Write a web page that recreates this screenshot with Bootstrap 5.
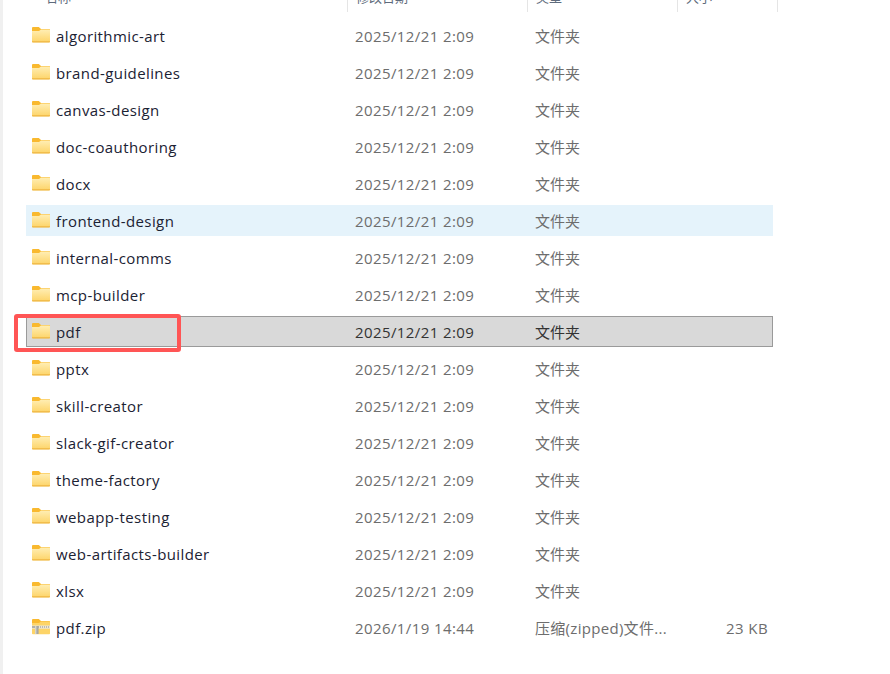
<!DOCTYPE html>
<html lang="zh">
<head>
<meta charset="utf-8">
<title>文件列表</title>
<link href="https://cdn.jsdelivr.net/npm/bootstrap@5.3.0/dist/css/bootstrap.min.css" rel="stylesheet">
<style>
html,body{height:100%;}
body{background:#fff;font-family:"Open Sans","Noto Sans CJK SC",sans-serif;font-size:15px;overflow:hidden;}
.explorer{height:674px;margin-left:3px;box-shadow:-3px 0 0 #f0f0f0;padding-left:23px;}
.col-head{height:12px;overflow:hidden;width:752px;display:grid;grid-template-columns:322px 180px 150px 100px;color:#5e6b7c;font-size:13px;}
.col-head>div{padding-left:8px;border-right:1px solid #e5e5e5;line-height:12px;}
.col-head span{display:block;margin-top:-9px;}
.col-head>div:first-child{padding-left:19px;}
.file-list{margin-top:8px;width:747px;display:flex;flex-direction:column;gap:6px;}
.file-row{height:31px;padding-top:2px;display:grid;grid-template-columns:321px 180px 150px 96px;align-items:center;color:#6d6d6d;border:1px solid transparent;}
.file-row>div{padding-left:8px;margin-left:-1px;white-space:nowrap;}
.file-row>.fname{display:flex;align-items:center;color:#1b2233;padding-left:6px;margin-left:-1px;gap:6px;}
.fname svg{flex:none;margin-top:-3px;}
.fname span,.fdate,.fsize{letter-spacing:.4px;}
.ftype-long{letter-spacing:.3px;}
.fsize{text-align:right;padding-right:6px;}
.is-hover{background:#e5f3fb;border-color:#e5f3fb;}
.is-selected{background:#d9d9d9;border-color:#9a9a9a;color:#333;}
.pick-mark{position:absolute;left:14px;top:314px;width:167px;height:38px;border:4px solid #ff5555;border-radius:3px;}
</style>
</head>
<body>
<svg width="0" height="0" class="position-absolute">
<defs>
<linearGradient id="fb" x1="0" y1="0" x2="0" y2="1"><stop offset="0" stop-color="#ffeeb4"/><stop offset="1" stop-color="#fdd468"/></linearGradient>
<symbol id="ico-folder" viewBox="0 0 18 16">
<path d="M0 1.2C0 .5.5 0 1.2 0h5.6L9 2h8.2c.5 0 .8.3.8.8V5H0z" fill="#f9b92f"/>
<path d="M0 4h7L9 2.6h8.3c.4 0 .7.3.7.7v11.2c0 .5-.3.8-.8.8H.8c-.5 0-.8-.3-.8-.8z" fill="url(#fb)"/>
<path d="M0 14.2h18v.6c0 .4-.3.7-.7.7H.7c-.4 0-.7-.3-.7-.7z" fill="#eeb541"/>
</symbol>
<symbol id="ico-zip" viewBox="0 0 18 16">
<path d="M0 1.2C0 .5.5 0 1.2 0h5.6L9 2h8.2c.5 0 .8.3.8.8V5H0z" fill="#f9b92f"/>
<path d="M0 4h7L9 2.6h8.3c.4 0 .7.3.7.7v11.2c0 .5-.3.8-.8.8H.8c-.5 0-.8-.3-.8-.8z" fill="#fdd468"/>
<rect x="0" y="6.5" width="18" height="3.2" fill="#ece7d6"/>
<path d="M6 8h12" stroke="#8c8c8c" stroke-width="1.2" stroke-dasharray="1 1"/>
<rect x="0" y="7" width="3" height="2" fill="#b5b1a4"/>
<rect x="3" y="7" width="3.6" height="8" fill="#a8a8a0"/>
<rect x="3" y="7" width="1.4" height="8" fill="#d5d5cf"/>
</symbol>
</defs>
</svg>
<main class="explorer position-relative">
<div class="col-head">
<div><span>名称</span></div><div><span>修改日期</span></div><div><span>类型</span></div><div><span>大小</span></div>
</div>
<div class="file-list">
<div class="file-row"><div class="fname"><svg width="18" height="16"><use href="#ico-folder"/></svg><span>algorithmic-art</span></div><div class="fdate">2025/12/21 2:09</div><div>文件夹</div><div class="fsize"></div></div>
<div class="file-row"><div class="fname"><svg width="18" height="16"><use href="#ico-folder"/></svg><span>brand-guidelines</span></div><div class="fdate">2025/12/21 2:09</div><div>文件夹</div><div class="fsize"></div></div>
<div class="file-row"><div class="fname"><svg width="18" height="16"><use href="#ico-folder"/></svg><span>canvas-design</span></div><div class="fdate">2025/12/21 2:09</div><div>文件夹</div><div class="fsize"></div></div>
<div class="file-row"><div class="fname"><svg width="18" height="16"><use href="#ico-folder"/></svg><span>doc-coauthoring</span></div><div class="fdate">2025/12/21 2:09</div><div>文件夹</div><div class="fsize"></div></div>
<div class="file-row"><div class="fname"><svg width="18" height="16"><use href="#ico-folder"/></svg><span>docx</span></div><div class="fdate">2025/12/21 2:09</div><div>文件夹</div><div class="fsize"></div></div>
<div class="file-row is-hover"><div class="fname"><svg width="18" height="16"><use href="#ico-folder"/></svg><span>frontend-design</span></div><div class="fdate">2025/12/21 2:09</div><div>文件夹</div><div class="fsize"></div></div>
<div class="file-row"><div class="fname"><svg width="18" height="16"><use href="#ico-folder"/></svg><span>internal-comms</span></div><div class="fdate">2025/12/21 2:09</div><div>文件夹</div><div class="fsize"></div></div>
<div class="file-row"><div class="fname"><svg width="18" height="16"><use href="#ico-folder"/></svg><span>mcp-builder</span></div><div class="fdate">2025/12/21 2:09</div><div>文件夹</div><div class="fsize"></div></div>
<div class="file-row is-selected"><div class="fname"><svg width="18" height="16"><use href="#ico-folder"/></svg><span>pdf</span></div><div class="fdate">2025/12/21 2:09</div><div>文件夹</div><div class="fsize"></div></div>
<div class="file-row"><div class="fname"><svg width="18" height="16"><use href="#ico-folder"/></svg><span>pptx</span></div><div class="fdate">2025/12/21 2:09</div><div>文件夹</div><div class="fsize"></div></div>
<div class="file-row"><div class="fname"><svg width="18" height="16"><use href="#ico-folder"/></svg><span>skill-creator</span></div><div class="fdate">2025/12/21 2:09</div><div>文件夹</div><div class="fsize"></div></div>
<div class="file-row"><div class="fname"><svg width="18" height="16"><use href="#ico-folder"/></svg><span>slack-gif-creator</span></div><div class="fdate">2025/12/21 2:09</div><div>文件夹</div><div class="fsize"></div></div>
<div class="file-row"><div class="fname"><svg width="18" height="16"><use href="#ico-folder"/></svg><span>theme-factory</span></div><div class="fdate">2025/12/21 2:09</div><div>文件夹</div><div class="fsize"></div></div>
<div class="file-row"><div class="fname"><svg width="18" height="16"><use href="#ico-folder"/></svg><span>webapp-testing</span></div><div class="fdate">2025/12/21 2:09</div><div>文件夹</div><div class="fsize"></div></div>
<div class="file-row"><div class="fname"><svg width="18" height="16"><use href="#ico-folder"/></svg><span>web-artifacts-builder</span></div><div class="fdate">2025/12/21 2:09</div><div>文件夹</div><div class="fsize"></div></div>
<div class="file-row"><div class="fname"><svg width="18" height="16"><use href="#ico-folder"/></svg><span>xlsx</span></div><div class="fdate">2025/12/21 2:09</div><div>文件夹</div><div class="fsize"></div></div>
<div class="file-row"><div class="fname"><svg width="18" height="16"><use href="#ico-zip"/></svg><span>pdf.zip</span></div><div class="fdate">2026/1/19 14:44</div><div class="ftype-long">压缩(zipped)文件...</div><div class="fsize">23 KB</div></div>
</div>
</main>
<div class="pick-mark"></div>
<script src="https://cdn.jsdelivr.net/npm/bootstrap@5.3.0/dist/js/bootstrap.bundle.min.js"></script>
</body>
</html>
